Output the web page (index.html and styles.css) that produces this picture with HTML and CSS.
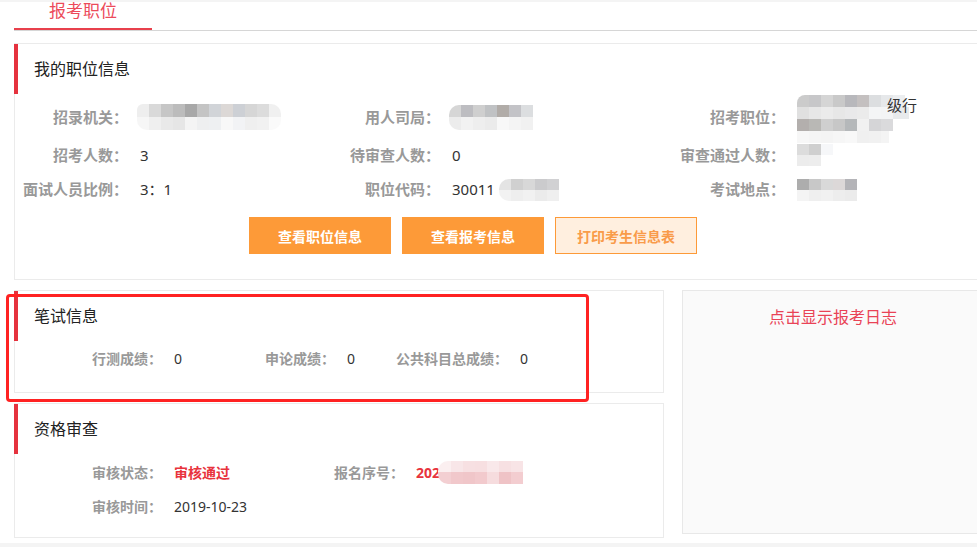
FILE: index.html
```html
<!DOCTYPE html>
<html lang="zh-CN">
<head>
<meta charset="utf-8">
<title>报考职位</title>
<link rel="stylesheet" href="styles.css">
</head>
<body>
<div class="page">
  <div class="tabs"><div class="tab">报考职位</div></div>

  <section class="card card-job">
    <h2 class="card-title">我的职位信息</h2>
    <div class="info-grid">
      <div class="lbl">招录机关：</div>
      <div class="val"><span class="mosaic m-agency"></span></div>
      <div class="lbl">用人司局：</div>
      <div class="val"><span class="mosaic m-bureau"></span></div>
      <div class="lbl">招考职位：</div>
      <div class="val val-post"><span class="mosaic m-post"></span><span class="post-tail">级行</span></div>

      <div class="lbl">招考人数：</div>
      <div class="val">3</div>
      <div class="lbl">待审查人数：</div>
      <div class="val">0</div>
      <div class="lbl">审查通过人数：</div>
      <div class="val"><span class="mosaic m-pass"></span></div>

      <div class="lbl">面试人员比例：</div>
      <div class="val">3：1</div>
      <div class="lbl">职位代码：</div>
      <div class="val">30011<span class="mosaic m-code"></span></div>
      <div class="lbl">考试地点：</div>
      <div class="val"><span class="mosaic m-place"></span></div>
    </div>
    <div class="actions">
      <button class="btn">查看职位信息</button>
      <button class="btn">查看报考信息</button>
      <button class="btn btn-light">打印考生信息表</button>
    </div>
  </section>

  <div class="lower">
    <div class="left-col">
      <section class="card card-exam">
        <h2 class="card-title">笔试信息</h2>
        <div class="score-row">
          <div class="item"><span class="lbl">行测成绩：</span><span class="val">0</span></div>
          <div class="item"><span class="lbl">申论成绩：</span><span class="val">0</span></div>
          <div class="item"><span class="lbl">公共科目总成绩：</span><span class="val">0</span></div>
        </div>
      </section>
      <section class="card card-review">
        <h2 class="card-title">资格审查</h2>
        <div class="review-grid">
          <div class="item"><span class="lbl">审核状态：</span><span class="val val-red">审核通过</span></div>
          <div class="item"><span class="lbl">报名序号：</span><span class="val val-red">202<span class="mosaic m-serial"></span></span></div>
          <div class="item"><span class="lbl">审核时间：</span><span class="val">2019-10-23</span></div>
        </div>
      </section>
      <div class="highlight"></div>
    </div>
    <aside class="log-panel">点击显示报考日志</aside>
  </div>
</div>
</body>
</html>
```
FILE: styles.css
```css
html, body {
  margin: 0;
  padding: 0;
  overflow: hidden;
  background: #f4f4f4;
}
body {
  font-family: "Noto Sans", "Noto Sans CJK SC", sans-serif;
  color: #333;
}
.page {
  box-sizing: border-box;
  margin-top: 2px;
  width: 984px;
  height: 541px;
  padding: 0 0 0 14px;
  background: #fff;
}

/* tabs */
.tabs {
  display: flex;
  height: 28px;
  border-bottom: 1px solid #d6d6d6;
}
.tab {
  box-sizing: border-box;
  width: 138px;
  height: 28px;
  border-bottom: 2px solid #e8404c;
  text-align: center;
  font-size: 17px;
  line-height: 18px;
  color: #ec4a5a;
}

/* cards */
.card {
  border: 1px solid #ebebeb;
  background: #fff;
}
.card-title {
  margin: 0 0 0 -1px;
  height: 50px;
  line-height: 50px;
  border-left: 4px solid #e5323e;
  padding-left: 16px;
  font-size: 16px;
  font-weight: normal;
  color: #222;
}
.card-job {
  margin-top: 12px;
}
.lbl {
  font-weight: bold;
  color: #999;
  text-align: right;
  white-space: nowrap;
}

.info-grid {
  margin-top: 1px;
  display: grid;
  grid-template-columns: 125px 188px 124px 221px 124px 1fr;
  grid-template-rows: 44px 32px 36px;
  align-items: center;
}
.info-grid .lbl {
  font-size: 15px;
  line-height: 20px;
  padding-right: 12px;
}
.info-grid .val {
  font-size: 15px;
  line-height: 20px;
  white-space: nowrap;
  display: flex;
  align-items: center;
}
.val-post {
  position: relative;
  align-self: start;
}
.post-tail {
  position: absolute;
  left: 90px;
  top: 1px;
  color: #333;
  font-size: 15px;
  line-height: 18px;
}

.actions {
  display: flex;
  gap: 11px;
  margin-top: 10px;
  padding: 0 0 25px 234px;
}
.btn {
  box-sizing: border-box;
  width: 142px;
  height: 37px;
  border: 1px solid #fd9a38;
  background: #fd9a38;
  color: #fff;
  font-family: inherit;
  font-size: 14px;
  font-weight: bold;
  padding: 0;
}
.btn-light {
  background: #ffefdf;
  color: #f99b4a;
}

/* lower area */
.lower {
  display: flex;
  gap: 18px;
  margin-top: 10px;
}
.left-col {
  position: relative;
  width: 650px;
  display: flex;
  flex-direction: column;
  gap: 10px;
}
.card-exam .card-title,
.card-review .card-title {
  margin-top: 0;
}
.score-row {
  display: grid;
  grid-template-columns: 173px 173px 173px;
  padding: 0 0 17px 35px;
}
.review-grid {
  display: grid;
  grid-template-columns: 242px 242px;
  padding: 1px 0 14px 35px;
}
.item {
  display: flex;
  align-items: center;
  height: 34px;
  font-size: 14px;
}
.item .lbl {
  box-sizing: border-box;
  width: 124px;
  padding-right: 12px;
}
.item .val {
  display: flex;
  align-items: center;
  white-space: nowrap;
}
.val-red {
  color: #e8333d;
  font-weight: bold;
}

.log-panel {
  box-sizing: border-box;
  width: 302px;
  border: 1px solid #e8e8e8;
  background: #fafafa;
  padding-top: 15px;
  text-align: center;
  font-size: 16px;
  line-height: 22px;
  color: #e94356;
  margin-bottom: 4px;
}

.highlight {
  position: absolute;
  left: -8px;
  top: 4px;
  width: 583px;
  height: 108px;
  box-sizing: border-box;
  border: 3px solid #ff2222;
  border-radius: 4px;
  pointer-events: none;
}

/* pixelated privacy mosaics */
.mosaic {
  display: inline-block;
  flex: none;
}
.m-agency {
  width: 144px;
  height: 26px;
  margin-left: -3px;
  border-radius: 6px 10px 10px 10px;
  background:
    linear-gradient(to right, #eeeeee 0 12px, #d9d9d9 12px 24px, #c6c6c6 24px 36px, #bcbcbc 36px 48px, #a8a8a8 48px 60px, #c4c4c4 60px 72px, #d1d4d8 72px 84px, #dcd8d6 84px 96px, #cdd0d5 96px 108px, #d6d6d6 108px 120px, #dcdcdc 120px 132px, #f0f0f0 132px 144px) left top / 100% 13px no-repeat,
    linear-gradient(to right, #f6f6f6 0 12px, #efefef 12px 24px, #e9e9e9 24px 36px, #e6e6e6 36px 48px, #f4f4f4 48px 60px, #eeeff0 60px 72px, #eef0f2 72px 84px, #f8f8f8 84px 96px, #f2f3f5 96px 108px, #efefef 108px 120px, #f1f1f1 120px 132px, #fafafa 132px 144px) left bottom / 100% 13px no-repeat;
}
.m-bureau {
  width: 84px;
  height: 25px;
  margin-left: -3px;
  border-radius: 10px 0 0 10px;
  background:
    linear-gradient(to right, #d6d6d6 0 12px, #bdbdc1 12px 24px, #cfcfcf 24px 36px, #c0c2c4 36px 48px, #b1aca8 48px 60px, #c3c3c7 60px 72px, #dcdee0 72px 84px) left top / 100% 12px no-repeat,
    linear-gradient(to right, #ececec 0 12px, #f2f2f2 12px 24px, #eeeeee 24px 36px, #ebebeb 36px 48px, #f8f8f8 48px 60px, #f4f4f4 60px 72px, #f1f1f1 72px 84px) left bottom / 100% 13px no-repeat;
}
.m-code {
  width: 60px;
  height: 22px;
  margin-left: 4px;
  margin-top: 2px;
  border-radius: 10px 0 0 10px;
  background:
    linear-gradient(to right, #e4e4e4 0 12px, #d0d0d0 12px 24px, #d8d8d8 24px 36px, #cbcbcd 36px 48px, #d1d1d3 48px 60px) left top / 100% 11px no-repeat,
    linear-gradient(to right, #f2f2f2 0 12px, #eeeeee 12px 24px, #f1f1f1 24px 36px, #ebebeb 36px 48px, #efefef 48px 60px) left bottom / 100% 11px no-repeat;
}
.m-post {
  width: 120px;
  height: 48px;
  margin-bottom: -4px;
  border-radius: 8px 0 0 0;
  background:
    linear-gradient(to right, #cbcbcb 0 12px, #c7c7c9 12px 24px, #d5d5d5 24px 36px, #c9c9c9 36px 48px, #b8b8bc 48px 60px, #c4c0c0 60px 72px, #dcdee0 72px 84px, #e6e8ea 84px 96px, #eceef0 96px 108px, transparent 108px) 0 0 / 100% 12px no-repeat,
    linear-gradient(to right, #e0e0e0 0 12px, #e7e7e7 12px 24px, #ebebeb 24px 36px, #e7e7e7 36px 48px, #e9e9ea 48px 60px, #ebebeb 60px 72px, #f4f5f6 72px 84px, #f3f4f5 84px 96px, #e8eaec 96px 112px, transparent 112px) 0 12px / 100% 12px no-repeat,
    linear-gradient(to right, #b3afad 0 12px, #b9b8b5 12px 24px, #cfcfcf 24px 36px, #c7c7c7 36px 48px, #b5b8ba 48px 60px, #f1f1f1 60px 72px, #d5d5d7 72px 84px, #dadadc 84px 96px, transparent 96px) 0 24px / 100% 12px no-repeat,
    linear-gradient(to right, #f7f7f7 0 12px, #f5f5f5 12px 24px, #f4f4f4 24px 36px, #f6f6f6 36px 48px, #f8f8f8 48px 60px, #f0f0f0 60px 72px, #f1f1f1 72px 84px, #f4f4f4 84px 92px, transparent 92px) 0 36px / 100% 12px no-repeat;
}
.m-pass {
  width: 36px;
  height: 22px;
  background:
    linear-gradient(to right, #dcdcdc 0 12px, #cfcfcf 12px 24px, #f6f7f9 24px 36px) left top / 100% 11px no-repeat,
    linear-gradient(to right, #ececec 0 12px, #ededed 12px 24px, transparent 24px) left bottom / 100% 11px no-repeat;
}
.m-place {
  width: 60px;
  height: 22px;
  margin-top: 2px;
  background:
    linear-gradient(to right, #adadad 0 12px, #c8c8c8 12px 24px, #d9d9d9 24px 36px, #dcd8d8 36px 48px, #b4b4b8 48px 60px) left top / 100% 11px no-repeat,
    linear-gradient(to right, #f4f4f4 0 12px, #efefef 12px 24px, #f1f1f1 24px 36px, #ededed 36px 48px, #ebebeb 48px 60px) left bottom / 100% 11px no-repeat;
}
.m-serial {
  width: 85px;
  height: 23px;
  margin-left: -2px;
  border-radius: 10px 0 0 10px;
  background:
    linear-gradient(to right, #fbeff0 0 13px, #f8e6e8 13px 25px, #f7e0e2 25px 37px, #f7dfe1 37px 49px, #f9e8ea 49px 61px, #f7e0e2 61px 73px, #f8e4e6 73px 85px) left top / 100% 11px no-repeat,
    linear-gradient(to right, #f3cfd2 0 13px, #f1c8cb 13px 25px, #f0c6c9 25px 37px, #f2cacd 37px 49px, #f6dcde 49px 61px, #efc3c6 61px 73px, #f3cdd0 73px 85px) left bottom / 100% 12px no-repeat;
}
```
